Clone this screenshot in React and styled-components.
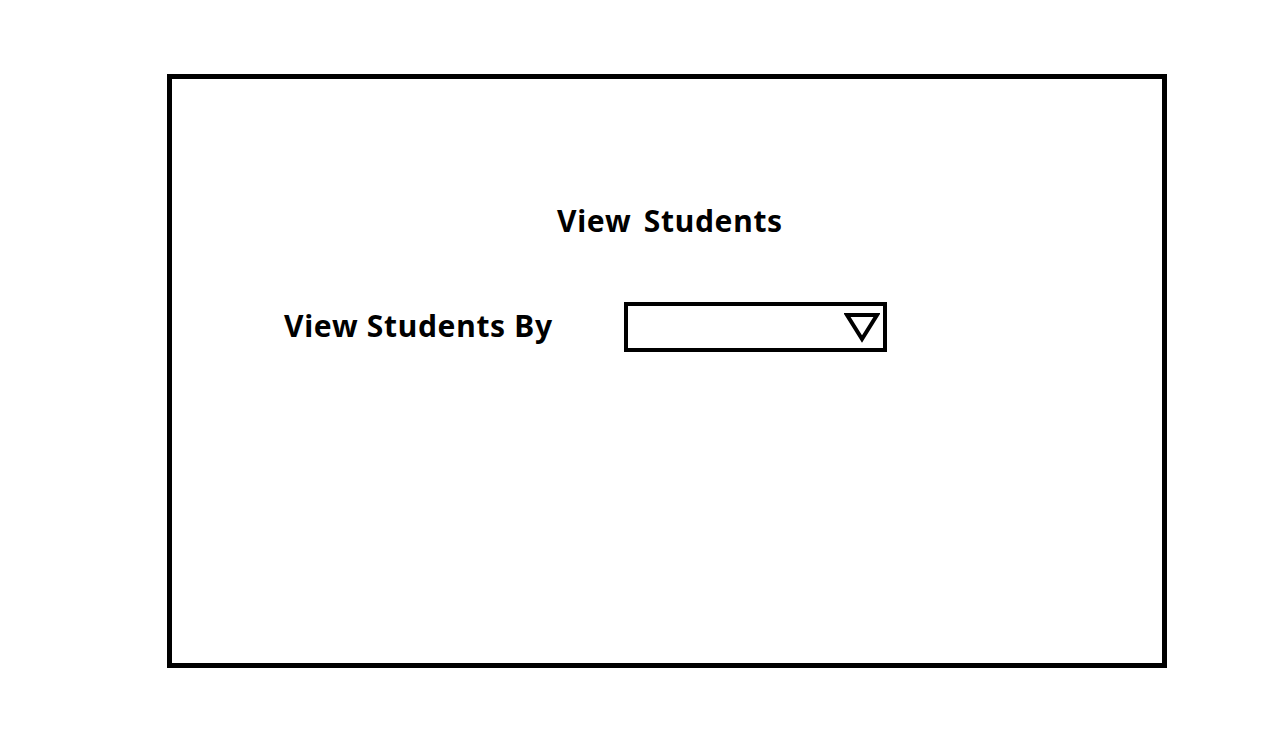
import React from 'react';
import styled, { createGlobalStyle } from 'styled-components';

const GlobalStyle = createGlobalStyle`
  html, body {
    margin: 0;
    padding: 0;
    background: #fff;
  }
  body {
    font-family: "Noto Sans", "Open Sans", sans-serif;
    color: #000;
  }
`;

const Page = styled.div`
  width: 1279px;
  height: 743px;
  padding: 74px 0 0 167px;
  box-sizing: border-box;
`;

const Frame = styled.section`
  width: 1000px;
  height: 594px;
  box-sizing: border-box;
  border: 5px solid #000;
  display: flex;
  flex-direction: column;
  padding: 123px 0 0 112px;
`;

const Title = styled.h1`
  margin: 0 0 0 273px;
  font-size: 30px;
  font-weight: 700;
  line-height: 38px;
  letter-spacing: 0.7px;
  word-spacing: 4px;
`;

const Row = styled.div`
  display: flex;
  align-items: center;
  margin-top: 62px;
`;

const Label = styled.label`
  font-size: 30px;
  font-weight: 700;
  line-height: 38px;
  letter-spacing: 0.7px;
  width: 340px;
  margin-top: -3px;
`;

const Select = styled.div`
  width: 263px;
  height: 50px;
  box-sizing: border-box;
  border: 4px solid #000;
  display: flex;
  align-items: center;
  justify-content: flex-end;
  padding-right: 3px;
`;

function Arrow() {
  return (
    <svg width="36" height="32" viewBox="0 0 36 32">
      <path d="M3 4 L33 4 L18 28 Z" fill="none" stroke="#000" strokeWidth="4" strokeLinejoin="miter" />
    </svg>
  );
}

export default function App() {
  return (
    <>
      <GlobalStyle />
      <Page>
        <Frame>
          <Title>View Students</Title>
          <Row>
            <Label>View Students By</Label>
            <Select>
              <Arrow />
            </Select>
          </Row>
        </Frame>
      </Page>
    </>
  );
}
